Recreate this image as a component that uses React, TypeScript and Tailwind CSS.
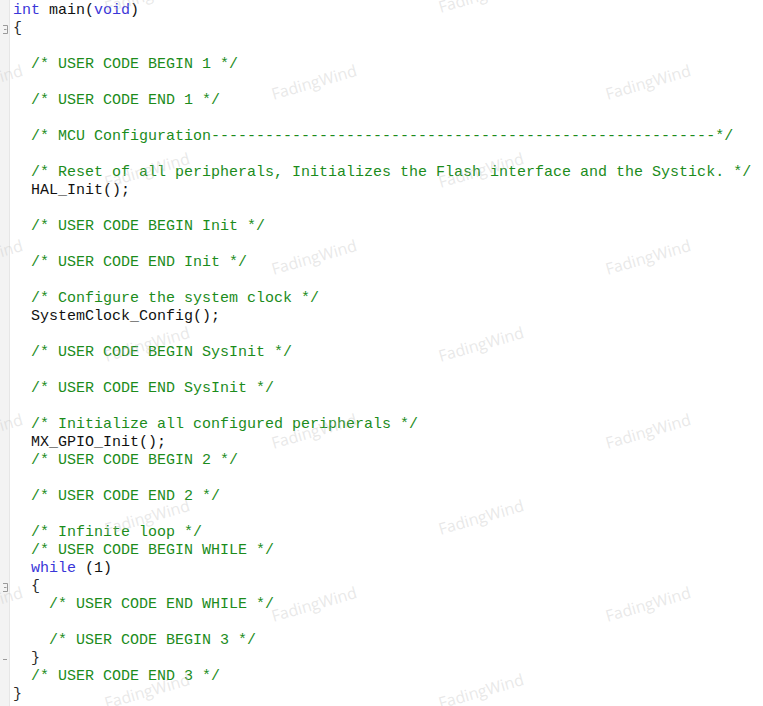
import React from "react";

type Tok = { t: string; k?: "kw" | "cm" | "br" };

const C = (indent: number, text: string): Tok[] => [
  { t: " ".repeat(indent) },
  { t: text, k: "cm" },
];
const P = (indent: number, text: string): Tok[] => [{ t: " ".repeat(indent) + text }];

const lines: Tok[][] = [
  [{ t: "int", k: "kw" }, { t: " main(" }, { t: "void", k: "kw" }, { t: ")" }],
  [{ t: "{", k: "br" }],
  [],
  C(2, "/* USER CODE BEGIN 1 */"),
  [],
  C(2, "/* USER CODE END 1 */"),
  [],
  C(2, "/* MCU Configuration" + "-".repeat(56) + "*/"),
  [],
  C(2, "/* Reset of all peripherals, Initializes the Flash interface and the Systick. */"),
  P(2, "HAL_Init();"),
  [],
  C(2, "/* USER CODE BEGIN Init */"),
  [],
  C(2, "/* USER CODE END Init */"),
  [],
  C(2, "/* Configure the system clock */"),
  P(2, "SystemClock_Config();"),
  [],
  C(2, "/* USER CODE BEGIN SysInit */"),
  [],
  C(2, "/* USER CODE END SysInit */"),
  [],
  C(2, "/* Initialize all configured peripherals */"),
  P(2, "MX_GPIO_Init();"),
  C(2, "/* USER CODE BEGIN 2 */"),
  [],
  C(2, "/* USER CODE END 2 */"),
  [],
  C(2, "/* Infinite loop */"),
  C(2, "/* USER CODE BEGIN WHILE */"),
  [{ t: "  " }, { t: "while", k: "kw" }, { t: " (1)" }],
  [{ t: "  " }, { t: "{", k: "br" }],
  C(4, "/* USER CODE END WHILE */"),
  [],
  C(4, "/* USER CODE BEGIN 3 */"),
  [{ t: "  " }, { t: "}", k: "br" }],
  C(2, "/* USER CODE END 3 */"),
  [{ t: "}", k: "br" }],
];

const foldStart = new Set([1, 32]);
const foldEnd = new Set([36]);

const marks: [number, number][] = [];
for (const x of [147, 481]) for (const y of [-5, 170, 344, 517, 691]) marks.push([x, y]);
for (const x of [-20, 314, 648]) for (const y of [82, 257, 431, 604]) marks.push([x, y]);

function cls(k?: string) {
  if (k === "kw") return "text-[#3a36d8]";
  if (k === "cm") return "text-[#1c8c1c]";
  if (k === "br") return "text-[#2a2a2a]";
  return "text-[#111111]";
}

export default function App() {
  return (
    <div className="relative flex h-[706px] w-[763px] overflow-hidden bg-white">
      <div className="flex w-[10px] shrink-0 flex-col border-r border-[#e6e6e6] bg-[#f3f3f3] pt-[2px]">
        {lines.map((_, i) => (
          <div key={i} className="flex h-[18px] items-center justify-center">
            {foldStart.has(i) && (
              <svg width="6" height="9" viewBox="0 0 6 9">
                <path d="M1 0.5 H5.5 V8.5 H1" fill="none" stroke="#9a9a9a" strokeWidth="1" />
                <path d="M2 4.5 H4.5" stroke="#9a9a9a" strokeWidth="1" />
              </svg>
            )}
            {foldEnd.has(i) && (
              <svg width="6" height="9" viewBox="0 0 6 9">
                <path d="M1 4.5 H5" stroke="#9a9a9a" strokeWidth="1" />
              </svg>
            )}
          </div>
        ))}
      </div>
      <div className="flex flex-col pl-[3px] pt-[2px] font-['Liberation_Mono','Courier_New',monospace] text-[15px] leading-[18px]">
        {lines.map((toks, i) => (
          <div key={i} className="h-[18px] whitespace-pre">
            {toks.map((tk, j) => (
              <span key={j} className={cls(tk.k)}>
                {tk.t}
              </span>
            ))}
          </div>
        ))}
      </div>
      {marks.map(([x, y], i) => (
        <div
          key={i}
          className="pointer-events-none absolute -translate-x-1/2 -translate-y-1/2 -rotate-[16deg] whitespace-nowrap font-['Open_Sans',sans-serif] text-[16px] text-[#bebebe59]"
          style={{ left: x, top: y }}
        >
          FadingWind
        </div>
      ))}
    </div>
  );
}
